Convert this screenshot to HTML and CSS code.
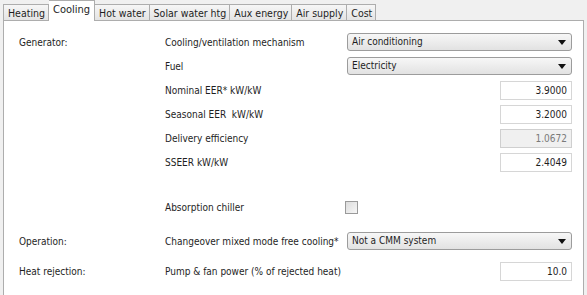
FILE: index.html
```html
<!DOCTYPE html>
<html lang="en">
<head>
  <meta charset="UTF-8">
  <title>Cooling</title>
  <link rel="stylesheet" href="styles.css">
</head>
<body>
  <div class="tabs">
    <div class="tab first">Heating</div>
    <div class="tab active">Cooling</div>
    <div class="tab">Hot water</div>
    <div class="tab">Solar water htg</div>
    <div class="tab">Aux energy</div>
    <div class="tab">Air supply</div>
    <div class="tab">Cost</div>
  </div>

  <div class="panel">
    <div class="form">
      <div class="group">Generator:</div>
      <div class="label">Cooling/ventilation mechanism</div>
      <div class="control"><div class="combo">Air conditioning<span class="arrow"></span></div></div>

      <div class="group"></div>
      <div class="label">Fuel</div>
      <div class="control"><div class="combo">Electricity<span class="arrow"></span></div></div>

      <div class="group"></div>
      <div class="label">Nominal EER* kW/kW</div>
      <div class="control right"><input class="num" type="text" value="3.9000"></div>

      <div class="group"></div>
      <div class="label">Seasonal EER &nbsp;kW/kW</div>
      <div class="control right"><input class="num" type="text" value="3.2000"></div>

      <div class="group"></div>
      <div class="label">Delivery efficiency</div>
      <div class="control right"><input class="num" type="text" value="1.0672" disabled></div>

      <div class="group"></div>
      <div class="label">SSEER kW/kW</div>
      <div class="control right"><input class="num" type="text" value="2.4049"></div>

      <div class="group"></div>
      <div class="label">Absorption chiller</div>
      <div class="control"><span class="check"></span></div>

      <div class="group">Operation:</div>
      <div class="label">Changeover mixed mode free cooling*</div>
      <div class="control"><div class="combo">Not a CMM system<span class="arrow"></span></div></div>

      <div class="group">Heat rejection:</div>
      <div class="label">Pump &amp; fan power (% of rejected heat)</div>
      <div class="control right"><input class="num" type="text" value="10.0"></div>
    </div>
  </div>
</body>
</html>
```

FILE: styles.css
```css
body {
  margin: 0;
  background: #f0f0f0;
  font-family: "DejaVu Sans Condensed", "DejaVu Sans", sans-serif;
  font-size: 10px;
  color: #1e1e1e;
  width: 587px;
  height: 295px;
  overflow: hidden;
}

.tabs {
  display: flex;
  align-items: flex-end;
  height: 20px;
  padding-left: 3px;
}

.tab {
  height: 16px;
  line-height: 16px;
  padding: 0 3px 0 4px;
  font-size: 10.5px;
  border: 1px solid #adadad;
  border-bottom: none;
  border-left: none;
  background: linear-gradient(#f6f6f6, #e4e4e4);
  box-sizing: border-box;
}

.tab.first {
  border-left: 1px solid #adadad;
}

.tab.active {
  height: 21px;
  line-height: 17px;
  background: #fff;
  padding: 0 4px;
  margin-bottom: -1px;
  font-size: 11px;
  position: relative;
  z-index: 1;
}

.panel {
  margin-left: 3px;
  width: 581px;
  height: 280px;
  background: #fff;
  border: 1px solid #adadad;
  border-bottom: none;
  box-sizing: border-box;
}

.form {
  display: grid;
  grid-template-columns: 146px 182px 225px;
  grid-template-rows: repeat(6, 24px) 45px 34px 30px;
  padding: 9px 0 0 15px;
  align-items: center;
}

.form > :nth-child(n+19) {
  align-self: end;
  height: 24px;
  display: flex;
  align-items: center;
}

.form > .control.right:nth-child(n+19) {
  justify-content: flex-end;
}

.form > .control:nth-child(n+19) > .combo {
  flex: 1;
}

.group,
.label {
  white-space: nowrap;
}

.control.right {
  display: flex;
  justify-content: flex-end;
}

.combo {
  position: relative;
  height: 18px;
  line-height: 16px;
  padding-left: 4px;
  border: 1px solid #9c9c9c;
  border-radius: 3px;
  background: linear-gradient(#f7f7f7, #e2e2e2);
  box-sizing: border-box;
}

.arrow {
  position: absolute;
  right: 5px;
  top: 6px;
  width: 0;
  height: 0;
  border-left: 4px solid transparent;
  border-right: 4px solid transparent;
  border-top: 5px solid #111;
}

.num {
  width: 72px;
  height: 19px;
  box-sizing: border-box;
  border: 1px solid #d6d6d6;
  background: #fff;
  text-align: right;
  padding: 0 4px;
  font-family: inherit;
  font-size: 10px;
  color: #1e1e1e;
}

.num:disabled {
  background: #f0f0f0;
  color: #7a7a7a;
  border-color: #cfcfcf;
}

.check {
  display: inline-block;
  width: 13px;
  height: 13px;
  margin-left: -2px;
  border: 1px solid #9a9a9a;
  background: linear-gradient(135deg, #dcdcdc, #f6f6f6);
  box-sizing: border-box;
}
```
